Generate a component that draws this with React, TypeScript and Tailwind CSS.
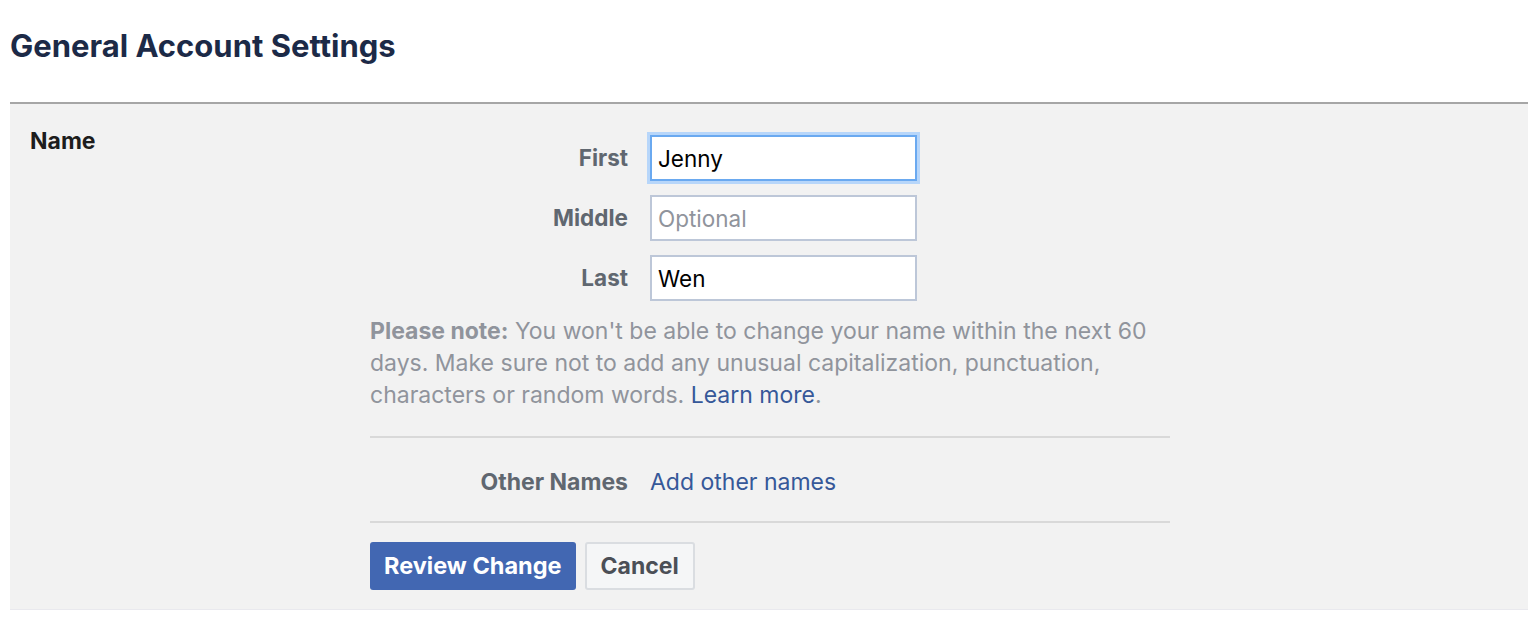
export default function App() {
  return (
    <div className="min-h-screen bg-white font-['Inter','Liberation_Sans',Arial,sans-serif]">
      <h1 className="px-[10px] pt-[27px] pb-[38px] text-[31px] leading-[37px] font-bold text-[#1c2a47]">
        General Account Settings
      </h1>

      <div className="mx-[10px] w-[1518px] bg-[#f2f2f2] border-t-2 border-[#a6a6a6] border-b border-b-[#e9e9ee] flex pl-[20px] pt-[23px] pb-[19px]">
        <div className="w-[340px] shrink-0 text-[23px] leading-[28px] font-bold text-[#1d1d1d]">
          Name
        </div>

        <div className="w-[800px] flex flex-col">
          <div className="flex flex-col gap-[14px] pt-[8px]">
            <Field label="First" value="Jenny" focused />
            <Field label="Middle" placeholder="Optional" />
            <Field label="Last" value="Wen" />
          </div>

          <p className="mt-[14px] text-[23px] leading-[32px] text-[#90949c]">
            <span className="font-bold">Please note:</span> You won't be able to change your name within the next 60
            days. Make sure not to add any unusual capitalization, punctuation, characters or random words.{" "}
            <a className="text-[#365899]">Learn more</a>.
          </p>

          <div className="mt-[25px] border-t-2 border-[#d9d9d9]" />

          <div className="flex items-center pt-[31px] pb-[26px]">
            <div className="w-[258px] text-right text-[23px] leading-[26px] font-bold text-[#606770]">
              Other Names
            </div>
            <a className="ml-[22px] text-[23px] leading-[26px] text-[#365899]">Add other names</a>
          </div>

          <div className="border-t-2 border-[#d9d9d9]" />

          <div className="flex gap-[9px] mt-[19px]">
            <button className="h-[48px] px-[14px] rounded-[3px] bg-[#4267b2] text-white text-[23.5px] font-bold">
              Review Change
            </button>
            <button className="h-[48px] px-[14px] rounded-[3px] bg-[#f5f6f7] border-2 border-[#dadde1] text-[#4b4f56] text-[23px] font-bold">
              Cancel
            </button>
          </div>
        </div>
      </div>
    </div>
  );
}

function Field({
  label,
  value,
  placeholder,
  focused = false,
}: {
  label: string;
  value?: string;
  placeholder?: string;
  focused?: boolean;
}) {
  return (
    <div className="flex items-center">
      <label className="w-[258px] text-right text-[22.5px] font-bold text-[#606770]">{label}</label>
      <input
        readOnly
        defaultValue={value}
        placeholder={placeholder}
        className={`ml-[22px] w-[267px] h-[46px] px-[6px] bg-white text-[22.5px] text-black placeholder:text-[#90949c] outline-none border-2 ${
          focused ? "border-[#6aa9f0] shadow-[0_0_0_3px_#b7d6fa]" : "border-[#bdc7d8]"
        }`}
      />
    </div>
  );
}
